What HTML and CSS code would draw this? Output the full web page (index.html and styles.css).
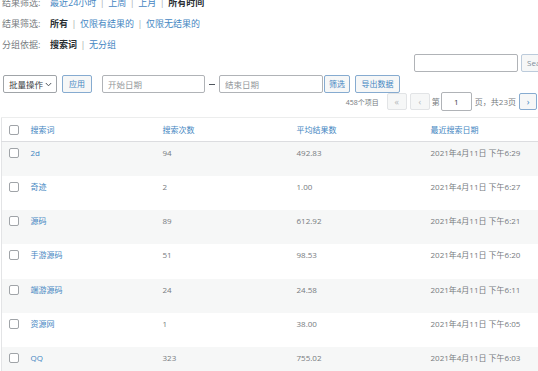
FILE: index.html
```html
<!DOCTYPE html>
<html lang="zh-CN">
<head>
<meta charset="utf-8">
<title>搜索统计</title>
<link rel="stylesheet" href="styles.css">
</head>
<body>
<div class="page">
  <div class="filters">
    <div class="frow"><span class="flabel">结果筛选:</span><span class="fvals"><a href="#">最近24小时</a><span class="sep">|</span><a href="#">上周</a><span class="sep">|</span><a href="#">上月</a><span class="sep">|</span><b>所有时间</b></span></div>
    <div class="frow"><span class="flabel">结果筛选:</span><span class="fvals"><b>所有</b><span class="sep">|</span><a href="#">仅限有结果的</a><span class="sep">|</span><a href="#">仅限无结果的</a></span></div>
    <div class="frow"><span class="flabel">分组依据:</span><span class="fvals"><b>搜索词</b><span class="sep">|</span><a href="#">无分组</a></span></div>
  </div>

  <div class="search-row">
    <input class="search-input" type="text">
    <button class="btn search-btn">Search</button>
  </div>

  <div class="toolbar">
    <div class="select">批量操作<svg class="chev" width="7" height="5" viewBox="0 0 7 5"><path d="M0.8 1 L3.5 3.8 L6.2 1" fill="none" stroke="#50575e" stroke-width="1"/></svg></div>
    <button class="btn apply">应用</button>
    <input class="date start" type="text" placeholder="开始日期">
    <span class="dash"></span>
    <input class="date end" type="text" placeholder="结束日期">
    <button class="btn filter">筛选</button>
    <button class="btn export">导出数据</button>
  </div>

  <div class="pager">
    <span class="count">458个项目</span>
    <span class="pbtn disabled">«</span>
    <span class="pbtn disabled">‹</span>
    <span class="ptext">第</span>
    <input class="pinput" type="text" value="1">
    <span class="ptext">页，共23页</span>
    <span class="pbtn next">›</span>
  </div>

  <table class="list">
    <colgroup>
      <col class="c-cb"><col class="c-kw"><col class="c-n"><col class="c-avg"><col class="c-date">
    </colgroup>
    <thead>
      <tr><th><span class="cb"></span></th><th><a href="#">搜索词</a></th><th><a href="#">搜索次数</a></th><th><a href="#">平均结果数</a></th><th><a href="#">最近搜索日期</a></th></tr>
    </thead>
    <tbody>
      <tr><td><span class="cb"></span></td><td><a href="#">2d</a></td><td>94</td><td>492.83</td><td>2021年4月11日 下午6:29</td></tr>
      <tr><td><span class="cb"></span></td><td><a href="#">奇迹</a></td><td>2</td><td>1.00</td><td>2021年4月11日 下午6:27</td></tr>
      <tr><td><span class="cb"></span></td><td><a href="#">源码</a></td><td>89</td><td>612.92</td><td>2021年4月11日 下午6:21</td></tr>
      <tr><td><span class="cb"></span></td><td><a href="#">手游源码</a></td><td>51</td><td>98.53</td><td>2021年4月11日 下午6:20</td></tr>
      <tr><td><span class="cb"></span></td><td><a href="#">端游源码</a></td><td>24</td><td>24.58</td><td>2021年4月11日 下午6:11</td></tr>
      <tr><td><span class="cb"></span></td><td><a href="#">资源网</a></td><td>1</td><td>38.00</td><td>2021年4月11日 下午6:05</td></tr>
      <tr><td><span class="cb"></span></td><td><a href="#">QQ</a></td><td>323</td><td>755.02</td><td>2021年4月11日 下午6:03</td></tr>
    </tbody>
  </table>
</div>
</body>
</html>
```

FILE: styles.css
```css
html, body {
  margin: 0;
  padding: 0;
  overflow: hidden;
  background: #fff;
}
body {
  font-family: "Open Sans", "Noto Sans CJK SC", sans-serif;
  color: #767b80;
}
.page {
  width: 566px;
}
a {
  color: #4486c2;
  text-decoration: none;
}
b {
  color: #2a2f33;
  font-weight: 700;
}

/* filters */
.filters {
  margin-top: -8px;
  padding-left: 2px;
  font-size: 9px;
}
.frow {
  display: flex;
  align-items: center;
  height: 21px;
  white-space: nowrap;
}
.flabel {
  width: 48px;
  color: #767b80;
}
.sep {
  color: #a7aaad;
  margin: 0 3.5px;
}

/* search */
.search-row {
  display: flex;
  justify-content: flex-end;
  gap: 3px;
  height: 18px;
  margin-top: -1px;
}
.search-input {
  box-sizing: border-box;
  width: 104px;
  height: 18px;
  margin: 0;
  border: 1px solid #b0b3b7;
  border-radius: 2px;
  background: #fff;
}
.btn {
  box-sizing: border-box;
  height: 18px;
  margin: 0;
  padding: 0;
  border: 1px solid #86abd0;
  border-radius: 2px;
  background: #f6f7f7;
  color: #4486c2;
  font-family: "Open Sans", "Noto Sans CJK SC", sans-serif;
  font-size: 8px;
  line-height: 16px;
  text-align: center;
  white-space: nowrap;
}
.search-btn {
  width: 45px;
  text-align: left;
  padding-left: 5px;
  border-color: #bccbdb;
  color: #7f8e9c;
}

/* toolbar */
.toolbar {
  display: flex;
  align-items: center;
  height: 18px;
  margin-top: 3px;
  padding-left: 3px;
}
.select {
  box-sizing: border-box;
  display: flex;
  align-items: center;
  justify-content: space-between;
  width: 54px;
  height: 18px;
  padding: 0 4px 0 5px;
  border: 1px solid #a0a4a8;
  border-radius: 2px;
  background: #fff;
  color: #3a4146;
  font-size: 8.5px;
}
.chev {
  display: block;
}
.apply {
  width: 30px;
  margin-left: 5px;
}
.date {
  box-sizing: border-box;
  height: 18px;
  margin: 0;
  padding: 0 5px;
  border: 1px solid #b0b3b7;
  border-radius: 2px;
  background: #fff;
  font-family: "Open Sans", "Noto Sans CJK SC", sans-serif;
  font-size: 8.5px;
}
.date::placeholder {
  color: #93979b;
}
.start {
  width: 103px;
  margin-left: 10px;
}
.dash {
  display: block;
  width: 6px;
  height: 1px;
  margin: 0 4px;
  background: #50575e;
}
.end {
  width: 104px;
}
.filter {
  width: 26px;
  margin-left: 1px;
}
.export {
  width: 45px;
  margin-left: 5px;
}

/* pager */
.pager {
  display: flex;
  align-items: center;
  justify-content: flex-end;
  height: 17px;
  padding-right: 29px;
  font-size: 8px;
  color: #767b80;
  white-space: nowrap;
}
.count {
  font-size: 7px;
  margin-right: 5px;
}
.pbtn {
  box-sizing: border-box;
  display: flex;
  align-items: center;
  justify-content: center;
  width: 20px;
  height: 17px;
  border: 1px solid #86abd0;
  border-radius: 2px;
  background: #f6f7f7;
  color: #4486c2;
  font-size: 9px;
  margin-left: 3px;
}
.pbtn.disabled {
  border-color: #e2e4e6;
  color: #b5b8bb;
}
.ptext {
  margin-left: 2px;
}
.pinput {
  box-sizing: border-box;
  width: 31px;
  height: 19px;
  margin: 0 1px 0 1px;
  border: 1px solid #b0b3b7;
  border-radius: 2px;
  text-align: center;
  font-family: "Open Sans", sans-serif;
  font-size: 8px;
  color: #3a4146;
}
.next {
  margin-left: 3px;
  width: 18px;
}

/* table */
.list {
  width: 566px;
  margin-top: 7px;
  margin-left: 1px;
  border-collapse: collapse;
  table-layout: fixed;
  font-size: 8px;
  border-left: 1px solid #e3e4e6;
  border-top: 1px solid #eceded;
}
.c-cb { width: 22px; }
.c-kw { width: 132px; }
.c-n { width: 134px; }
.c-avg { width: 134px; }
.list th, .list td {
  padding: 0 0 0 7px;
  text-align: left;
  font-weight: 400;
  white-space: nowrap;
}
.list th {
  height: 23px;
  vertical-align: middle;
  border-bottom: 1px solid #dcdde0;
  line-height: 12px;
}
.list td {
  height: 34.3px;
  box-sizing: border-box;
  vertical-align: top;
  padding-top: 5px;
  line-height: 12px;
}
.list tbody tr:nth-child(odd) td {
  background: #f6f7f7;
}
.cb {
  display: block;
  box-sizing: border-box;
  width: 10px;
  height: 10px;
  margin-top: 1px;
  border: 1px solid #a0a4a8;
  border-radius: 2px;
  background: #fff;
}
.list th .cb {
  margin-top: 0;
}
```
